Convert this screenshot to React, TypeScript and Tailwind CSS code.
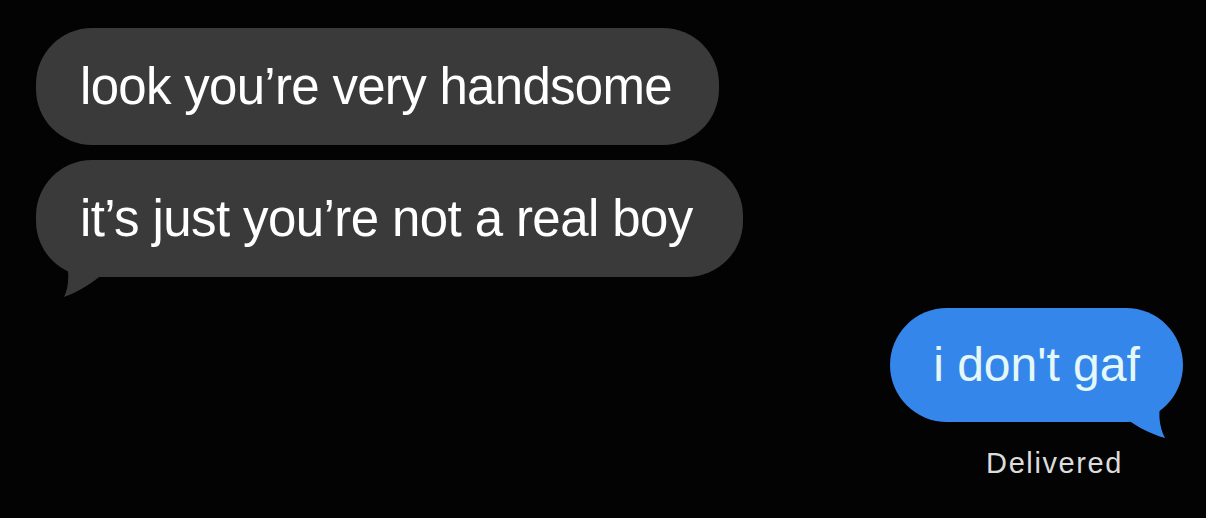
import React from "react";

const font = { fontFamily: '"Liberation Sans", Arial, sans-serif' };

export default function App() {
  return (
    <div className="w-[1206px] h-[518px] bg-[#030303] overflow-hidden" style={font}>
      <div className="flex flex-col pt-[28px] pl-[36px] gap-[15px]">
        <div className="relative self-start h-[117px] rounded-[56px] bg-[#3a3a3b] flex items-center pl-[44px] pr-[47px]">
          <span className="text-[51px] text-white tracking-[-0.7px] leading-none">look you’re very handsome</span>
        </div>
        <div className="relative self-start h-[117px] rounded-[56px] bg-[#3a3a3b] flex items-center pl-[44px] pr-[50px]">
          <span className="text-[51px] text-white tracking-[-0.6px] leading-none">it’s just you’re not a real boy</span>
          <svg className="absolute left-[16px] bottom-[-20px]" width="60" height="50" viewBox="0 0 60 50">
            <path d="M10 0 C 18 20, 18 38, 12 50 C 28 44, 40 36, 52 26 L 40 0 Z" fill="#3a3a3b" />
          </svg>
        </div>
      </div>
      <div className="flex flex-col items-end pr-[23px] mt-[31px]">
        <div className="relative h-[114px] w-[293px] rounded-[57px] bg-[#3586ea] flex items-center justify-center">
          <span className="text-[48px] text-[#e4f8f8] leading-none">i don't gaf</span>
          <svg className="absolute right-[14px] bottom-[-22px]" width="50" height="50" viewBox="0 0 50 50">
            <path d="M44 0 C 38 18, 40 32, 46 44 C 32 40, 20 34, 6 24 L 20 0 Z" fill="#3586ea" />
          </svg>
        </div>
        <div className="mt-[27px] mr-[60px] text-[29px] text-[#dcdcdc] leading-none tracking-[1.6px]">Delivered</div>
      </div>
    </div>
  );
}
